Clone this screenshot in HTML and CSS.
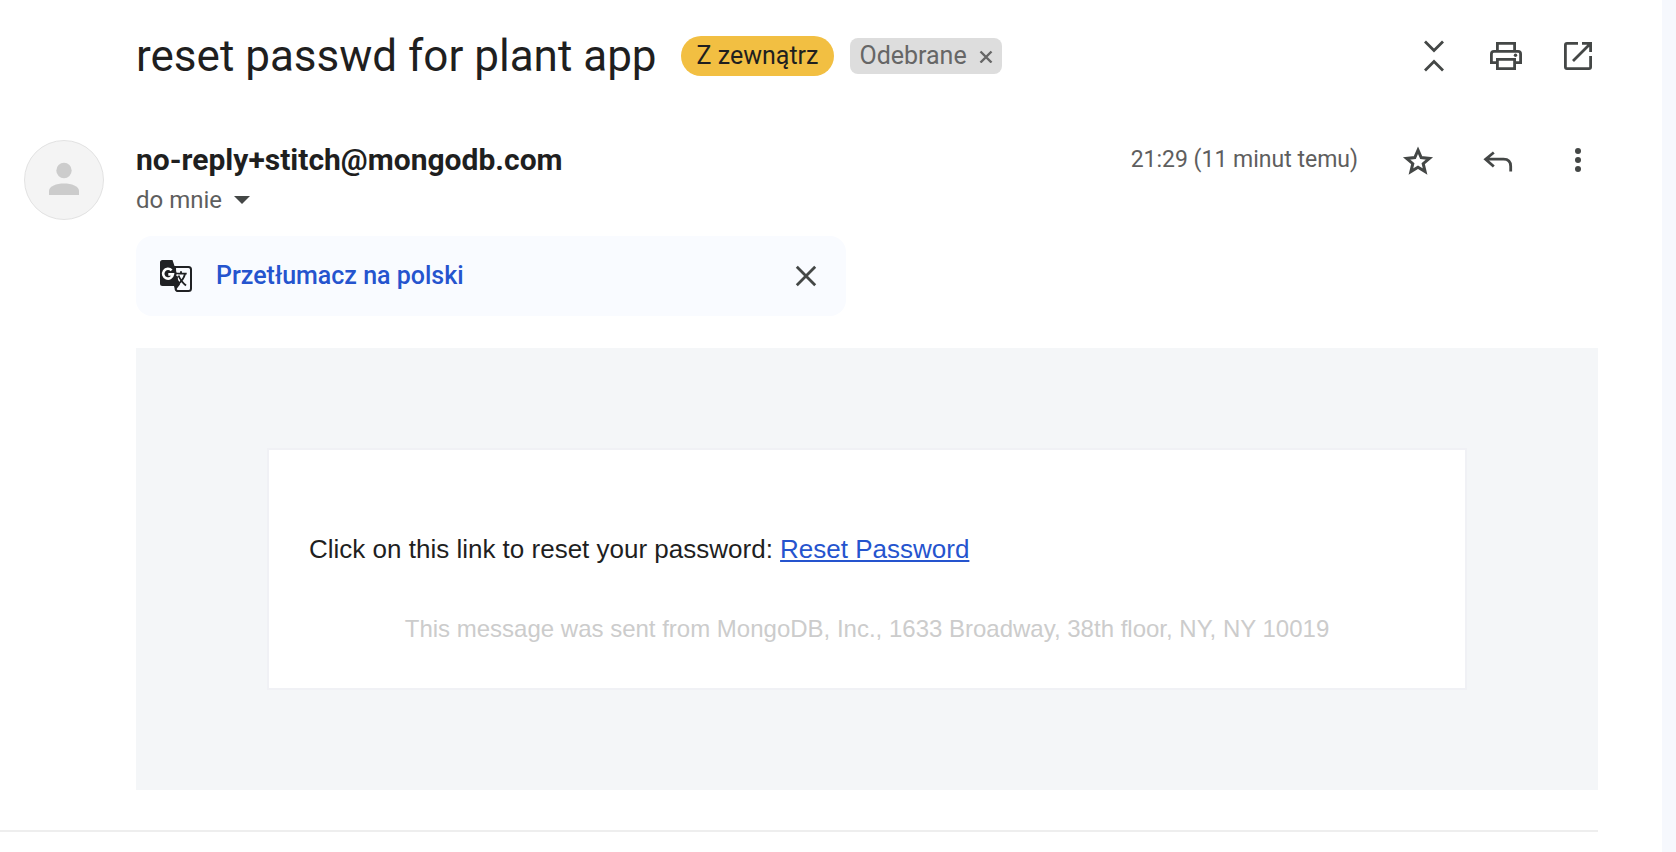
FILE: index.html
```html
<!DOCTYPE html>
<html lang="pl">
<head>
<meta charset="utf-8">
<title>reset passwd for plant app</title>
<link rel="stylesheet" href="styles.css">
</head>
<body>
<main class="page">
  <header class="subject">
    <h1 class="subject-title">reset passwd for plant app</h1>
    <span class="tag-external">Z zewnątrz</span>
    <span class="tag-label">Odebrane
      <button class="tag-remove" type="button" aria-label="Usuń etykietę"><svg viewBox="0 0 14 14" width="14" height="14"><path d="M1.500 2.500l11 11M12.500 2.500l-11 11" fill="none" stroke="#666" stroke-width="2.400"/></svg></button>
    </span>
    <div class="subject-actions">
      <button class="icon-button" type="button" aria-label="Zwiń wszystko"><svg viewBox="0 0 40 40"><path d="M11 5.500l9 9 9-9M11 34.500l9-9 9 9" fill="none" stroke="#444746" stroke-width="2.800"/></svg></button>
      <button class="icon-button" type="button" aria-label="Drukuj"><svg viewBox="0 0 40 40"><g fill="none" stroke="#444746" stroke-width="2.800"><path d="M11.400 15V7.400h17.200V15"/><path d="M11.400 26.600h-6V18q0-2.600 2.600-2.600h24q2.600 0 2.600 2.600v8.600h-6"/><path d="M11.400 23.400h17.200v9.200H11.400z"/></g><circle cx="29.500" cy="19.300" r="1.700" fill="#444746"/></svg></button>
      <button class="icon-button" type="button" aria-label="W nowym oknie"><svg viewBox="0 0 40 40"><g fill="none" stroke="#444746" stroke-width="2.800"><path d="M20 7.400H9Q7.400 7.400 7.400 9v22q0 1.600 1.600 1.600h22q1.600 0 1.600-1.600V20"/><path d="M24 7.400h8.600V16M32 8L15 25"/></g></svg></button>
    </div>
  </header>

  <article class="mail">
    <div class="avatar-column">
      <svg class="avatar" viewBox="0 0 80 80" role="img" aria-label="Nadawca"><circle cx="40" cy="40" r="39.500" fill="#f4f4f4" stroke="#e2e2e2"/><circle cx="40" cy="30.500" r="7.700" fill="#ccc"/><path d="M25 55v-4c0-10 30-10 30 0v4z" fill="#ccc"/></svg>
    </div>
    <div class="mail-main">
      <div class="mail-head">
        <div class="sender">
          <h2 class="sender-name">no-reply+stitch@mongodb.com</h2>
          <button class="recipient" type="button">do mnie <svg viewBox="0 0 16 8" width="16" height="8"><path d="M0 0h16L8 8z" fill="#444746"/></svg></button>
        </div>
        <div class="mail-meta">
          <time class="time">21:29 (11 minut temu)</time>
          <button class="icon-button" type="button" aria-label="Oznacz gwiazdką"><svg viewBox="0 0 40 40"><path d="M20 10.200l3.200 7.400 8.200.8-6.200 5.300 1.900 7.900-7.100-4.300-7.100 4.300 1.900-7.900-6.200-5.300 8.200-.8z" fill="none" stroke="#444746" stroke-width="3"/></svg></button>
          <button class="icon-button" type="button" aria-label="Odpowiedz"><svg viewBox="0 0 40 40"><path d="M15.800 12.500L7.600 19.200l8.200 7.300M7.600 19.200h17.900q7.200 0 7.200 7.300v5" fill="none" stroke="#444746" stroke-width="2.800"/></svg></button>
          <button class="icon-button" type="button" aria-label="Więcej"><svg viewBox="0 0 40 40"><g fill="#444746"><circle cx="20" cy="11" r="3"/><circle cx="20" cy="20" r="3"/><circle cx="20" cy="29" r="3"/></g></svg></button>
        </div>
      </div>

      <div class="translate">
        <svg class="translate-icon" viewBox="0 0 32 32"><path d="M15 6.900h13.500q2.500 0 2.500 2.500v19.100q0 2.500-2.500 2.500H18q-2 0-2.400-2z" fill="#fafbff" stroke="#202124" stroke-width="2"/><path d="M2.500 0h10l2 6 5.500 18.500-4.300 5.500-1.700-4H2.500Q0 26 0 23.500v-21Q0 0 2.500 0z" fill="#202124"/><path d="M11.600 10.300A4.900 4.900 0 1 0 12.900 14.400H8.300" fill="none" stroke="#fff" stroke-width="2.600"/><path d="M15.500 13.600h11.200M21 11.200v2.400M25 14q-1.500 6-7.500 10.500M18.500 15.500q2 5.500 7.500 10" fill="none" stroke="#202124" stroke-width="1.900"/><path d="M16.200 15.200h2M18.200 18.200l1.400 3" fill="none" stroke="#fff" stroke-width="1.200"/></svg>
        <button class="translate-link" type="button">Przetłumacz na polski</button>
        <button class="icon-button" type="button" aria-label="Zamknij"><svg viewBox="0 0 40 40"><path d="M10.800 10.800l18.400 18.400M29.200 10.800L10.800 29.200" fill="none" stroke="#444746" stroke-width="2.800"/></svg></button>
      </div>

      <section class="message">
        <div class="card">
          <p class="card-text">Click on this link to reset your password: <a href="#reset">Reset Password</a></p>
          <p class="card-footer">This message was sent from MongoDB, Inc., 1633 Broadway, 38th floor, NY, NY 10019</p>
        </div>
      </section>
    </div>
  </article>
</main>
</body>
</html>
```
FILE: styles.css
```css
* {
  box-sizing: border-box;
}

body {
  margin: 0;
  padding-right: 14px;
  background: #f6f8fd;
  font-family: Roboto, "Noto Sans", sans-serif;
  font-size: 24px;
  line-height: 32px;
  color: #1f1f1f;
}

.page {
  min-height: 100vh;
  padding-right: 64px;
  background: #fff;
}

h1,
h2,
p {
  margin: 0;
}

button {
  padding: 0;
  border: 0;
  background: none;
  font: inherit;
  color: inherit;
  cursor: pointer;
}

svg {
  display: block;
}

.icon-button,
.icon-button svg {
  width: 40px;
  height: 40px;
}

.subject {
  display: flex;
  align-items: center;
  padding: 28px 0 28px 136px;
}

.subject-title {
  margin-right: 24px;
  font-size: 44px;
  font-weight: 400;
  line-height: 56px;
}

.tag-external {
  margin-right: 16px;
  padding: 4px 16px;
  border-radius: 20px;
  background: #f2bf42;
  font-size: 25px;
}

.tag-label {
  display: flex;
  align-items: center;
  gap: 12px;
  padding: 2px 9px;
  border-radius: 8px;
  background: #ddd;
  font-size: 25px;
  color: #666;
}

.subject-actions {
  display: flex;
  gap: 32px;
  margin-left: auto;
}

.mail {
  display: flex;
  padding: 28px 0 40px;
  border-bottom: 2px solid #eee;
}

.avatar-column {
  flex: 0 0 136px;
  padding-left: 24px;
}

.avatar {
  width: 80px;
  height: 80px;
}

.mail-main {
  flex: 1;
}

.mail-head {
  display: flex;
  justify-content: space-between;
  align-items: flex-start;
  margin-bottom: 16px;
}

.sender-name {
  font-size: 30px;
  font-weight: 700;
  line-height: 40px;
}

.recipient {
  display: flex;
  align-items: center;
  gap: 12px;
  height: 40px;
  color: #5e5e5e;
}

.mail-meta {
  display: flex;
  align-items: center;
  gap: 40px;
  font-size: 23px;
  color: #5e5e5e;
}

.translate {
  display: flex;
  align-items: center;
  max-width: 710px;
  height: 80px;
  margin-bottom: 32px;
  padding: 0 20px 0 24px;
  border-radius: 16px;
  background: #f9fbff;
}

.translate-icon {
  width: 32px;
  height: 32px;
  margin-right: 24px;
}

.translate-link {
  margin-right: auto;
  font-size: 25px;
  font-weight: 500;
  color: #2554ce;
}

.message {
  padding: 100px 16px;
  background: #f4f6f8;
  font-family: "Liberation Sans", Arial, sans-serif;
}

.card {
  max-width: 1200px;
  margin: 0 auto;
  padding: 79px 40px 39px;
  border: 2px solid #f0f1f5;
  background: #fff;
}

.card-text {
  margin-bottom: 40px;
  font-size: 26px;
  line-height: 40px;
}

.card-text a {
  color: #2554ce;
}

.card-footer {
  font-size: 24px;
  line-height: 40px;
  text-align: center;
  color: #ccc;
}
```
